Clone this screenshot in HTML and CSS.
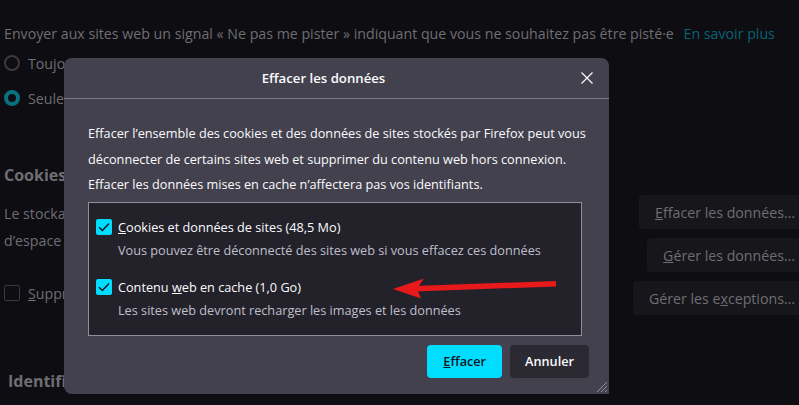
FILE: index.html
```html
<!DOCTYPE html>
<html lang="fr">
  <head>
    <meta charset="utf-8" />
    <title>Effacer les données</title>
    <link rel="stylesheet" href="styles.css">
  </head>

  <body>
    <!-- settings page behind the dialog -->
    <div class="page">
      <p class="dnt">
        Envoyer aux sites web un signal « Ne pas me pister » indiquant que vous ne souhaitez pas être pisté·e
        <a class="learn-more">En savoir plus</a>
      </p>
      <div class="radio-row"><span class="radio"></span>Toujours</div>
      <div class="radio-row"><span class="radio checked"></span>Seulement quand Firefox est paramétré pour bloquer les traqueurs connus</div>

      <h2 class="section-title">Cookies et données de sites</h2>
      <div class="cookies-body">
        <div class="cookies-left">
          <p class="cookies-text">Le stockage des cookies et des données de sites utilise actuellement 49,3 Mo<br>d’espace disque.</p>
          <div class="check-row"><span class="square"></span><span><u>S</u>upprimer les cookies</span></div>
        </div>
        <div class="cookies-buttons">
          <button class="page-btn"><u>E</u>ffacer les données…</button>
          <button class="page-btn"><u>G</u>érer les données…</button>
          <button class="page-btn">Gérer les e<u>x</u>ceptions…</button>
        </div>
      </div>

      <h2 class="section-title ident">Identifiants et mots de passe</h2>
    </div>

    <!-- the modal -->
    <div class="dialog">
      <div class="dialog-header">
        <div class="dialog-title">Effacer les données</div>
        <button class="close-btn">
          <svg width="12" height="12" viewBox="0 0 12 12">
            <path d="M0.5 0.5 L11.5 11.5 M11.5 0.5 L0.5 11.5" stroke="#fbfbfe" stroke-width="1.2" fill="none" />
          </svg>
        </button>
      </div>
      <div class="dialog-body">
        <p class="dialog-text">
          Effacer l’ensemble des cookies et des données de sites stockés par Firefox peut vous
          déconnecter de certains sites web et supprimer du contenu web hors connexion.
          Effacer les données mises en cache n’affectera pas vos identifiants.
        </p>
        <div class="options">
          <div class="option">
            <div class="option-label"><span class="checkbox"><svg width="16" height="16" viewBox="0 0 16 16"><path d="M3 8.2 L6.4 11.5 L13 4.6" stroke="#15141a" stroke-width="1.4" fill="none" /></svg></span><span><u>C</u>ookies et données de sites (48,5 Mo)</span></div>
            <div class="option-desc">Vous pouvez être déconnecté des sites web si vous effacez ces données</div>
          </div>
          <div class="option">
            <div class="option-label"><span class="checkbox"><svg width="16" height="16" viewBox="0 0 16 16"><path d="M3 8.2 L6.4 11.5 L13 4.6" stroke="#15141a" stroke-width="1.4" fill="none" /></svg></span><span>Contenu <u>w</u>eb en cache (1,0 Go)</span></div>
            <div class="option-desc">Les sites web devront recharger les images et les données</div>
          </div>
        </div>
        <div class="dialog-buttons">
          <button class="btn primary"><u>E</u>ffacer</button>
          <button class="btn">Annuler</button>
        </div>
      </div>
      <svg class="grip" width="14" height="14" viewBox="0 0 14 14">
        <path d="M13 3 L3 13 M13 7 L7 13 M13 11 L11 13" stroke="#8f8f9d" stroke-width="1" fill="none" />
      </svg>
    </div>

    <!-- annotation arrow -->
    <svg class="arrow" width="799" height="405" viewBox="0 0 799 405">
      <path d="M414 286 L556 281 L556 286.5 L414 291.5 Z" fill="#e8191b" />
      <path d="M393 289 L424 278.5 L417 288.5 L421 298.5 Z" fill="#e8191b" />
    </svg>
  </body>
</html>
```

FILE: styles.css
```css
body {
  margin: 0;
  padding: 0;
  background-color: #0e0d12;
  font-family: "Open Sans", "Noto Sans", sans-serif;
  color: #6f6e73;
  overflow: hidden;
  width: 799px;
  height: 405px;
}

p {
  margin: 0;
}

.page {
  width: 807px;
  padding: 24px 0 0 4px;
  font-size: 14.2px;
}

.dnt {
  line-height: 20px;
  white-space: nowrap;
}

.learn-more {
  color: #0a6272;
  margin-left: 6px;
}

.radio-row {
  display: flex;
  align-items: center;
  height: 30px;
  margin-top: 5px;
  white-space: nowrap;
}

.radio-row:first-of-type {
  margin-top: 4px;
}

.radio {
  width: 12px;
  height: 12px;
  border: 2px solid #3b3a41;
  border-radius: 50%;
  margin-right: 8px;
  flex-shrink: 0;
}

.radio.checked {
  border: 4px solid #0a7181;
  width: 8px;
  height: 8px;
  background-color: #0e0d12;
}

.section-title {
  font-size: 16px;
  font-weight: 700;
  line-height: 24px;
  margin: 50px 0 0 0;
  white-space: nowrap;
}

.ident {
  margin: 54px 0 0 4px;
}

.cookies-body {
  display: flex;
  justify-content: space-between;
  margin-top: 8px;
}

.cookies-left {
  padding-top: 5px;
  white-space: nowrap;
}

.cookies-text {
  line-height: 27px;
}

.check-row {
  display: flex;
  align-items: center;
  height: 20px;
  margin-top: 29px;
}

.square {
  width: 14px;
  height: 14px;
  border: 1px solid #3b3a41;
  border-radius: 2px;
  margin-right: 8px;
}

.cookies-buttons {
  display: flex;
  flex-direction: column;
  align-items: flex-end;
  gap: 9px;
}

.page-btn {
  height: 34px;
  padding: 0 16px;
  border: none;
  border-radius: 4px;
  background-color: #17161b;
  color: #6f6e73;
  font-family: inherit;
  font-size: 14.2px;
  white-space: nowrap;
}

.dialog {
  position: absolute;
  left: 64px;
  top: 58px;
  width: 545px;
  height: 336px;
  background-color: #42414d;
  border-radius: 8px 8px 0 8px;
  color: #fbfbfe;
  font-size: 12.7px;
}

.dialog-header {
  display: flex;
  align-items: center;
  height: 40px;
  padding: 0 6px 0 12px;
  border-bottom: 1px solid #7a7984;
}

.dialog-title {
  flex: 1;
  text-align: center;
  font-size: 13.2px;
  font-weight: 600;
}

.close-btn {
  width: 32px;
  height: 32px;
  border: none;
  background: none;
  display: flex;
  align-items: center;
  justify-content: center;
  padding: 0;
}

.dialog-body {
  padding: 22px 20px 0 24px;
}

.dialog-text {
  line-height: 25.5px;
  width: 510px;
}

.options {
  margin-top: 4px;
  width: 494px;
  height: 134px;
  background-color: #23222b;
  border: 1px solid #8f8f9d;
  padding: 13px 0 0 7px;
  box-sizing: border-box;
}

.option + .option {
  margin-top: 16px;
}

.option-label {
  display: flex;
  align-items: center;
  height: 22px;
}

.checkbox {
  width: 16px;
  height: 16px;
  border-radius: 2px;
  background-color: #00ddff;
  margin-right: 6px;
  display: flex;
}

.option-desc {
  margin: 2px 0 0 22px;
  line-height: 20px;
  color: #bfbfc9;
}

.dialog-buttons {
  display: flex;
  justify-content: flex-end;
  gap: 8px;
  margin-top: 9px;
}

.btn {
  height: 33px;
  padding: 0 15px;
  border: none;
  border-radius: 4px;
  background-color: #2b2a33;
  color: #fbfbfe;
  font-family: inherit;
  font-size: 12.7px;
  font-weight: 600;
}

.btn.primary {
  background-color: #00ddff;
  color: #15141a;
  padding: 0 16px;
}

.grip {
  position: absolute;
  right: 1px;
  bottom: 1px;
}

.arrow {
  position: absolute;
  left: 0;
  top: 0;
}
```
